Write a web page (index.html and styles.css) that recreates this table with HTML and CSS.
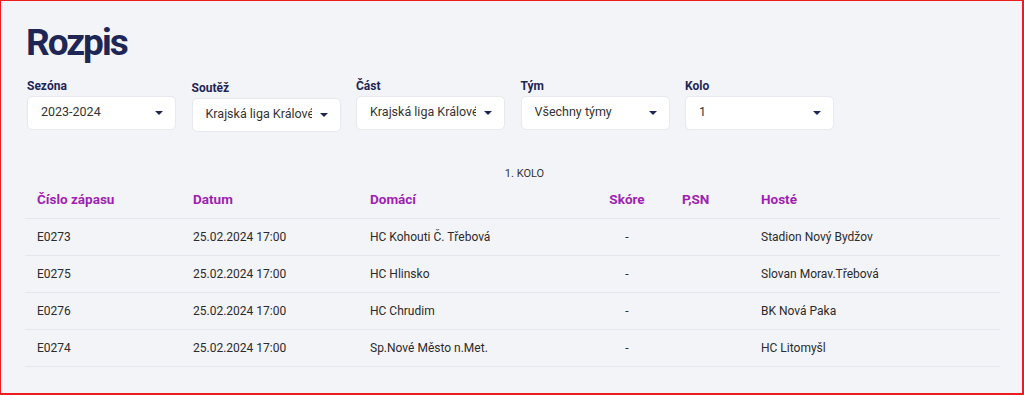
FILE: index.html
```html
<!DOCTYPE html>
<html lang="cs">
<head>
<meta charset="utf-8">
<title>Rozpis</title>
<link rel="stylesheet" href="styles.css">
</head>
<body>
<div class="frame">
  <h1 class="title">Rozpis</h1>
  <div class="filters">
    <div class="filter">
      <label class="flabel">Sezóna</label>
      <div class="select"><span class="sval">2023-2024</span><span class="caret"></span></div>
    </div>
    <div class="filter low">
      <label class="flabel">Soutěž</label>
      <div class="select"><span class="sval">Krajská liga Královéhradeckého kraje</span><span class="caret"></span></div>
    </div>
    <div class="filter">
      <label class="flabel">Část</label>
      <div class="select"><span class="sval">Krajská liga Královéhradeckého kraje</span><span class="caret"></span></div>
    </div>
    <div class="filter">
      <label class="flabel">Tým</label>
      <div class="select"><span class="sval">Všechny týmy</span><span class="caret"></span></div>
    </div>
    <div class="filter">
      <label class="flabel">Kolo</label>
      <div class="select"><span class="sval">1</span><span class="caret"></span></div>
    </div>
  </div>

  <div class="round">1. KOLO</div>
  <div class="table">
    <div class="row head">
      <div class="c">Číslo zápasu</div>
      <div class="c">Datum</div>
      <div class="c">Domácí</div>
      <div class="c center">Skóre</div>
      <div class="c psn">P,SN</div>
      <div class="c">Hosté</div>
    </div>
    <div class="row">
      <div class="c">E0273</div>
      <div class="c">25.02.2024 17:00</div>
      <div class="c">HC Kohouti Č. Třebová</div>
      <div class="c center">-</div>
      <div class="c psn"></div>
      <div class="c">Stadion Nový Bydžov</div>
    </div>
    <div class="row">
      <div class="c">E0275</div>
      <div class="c">25.02.2024 17:00</div>
      <div class="c">HC Hlinsko</div>
      <div class="c center">-</div>
      <div class="c psn"></div>
      <div class="c">Slovan Morav.Třebová</div>
    </div>
    <div class="row">
      <div class="c">E0276</div>
      <div class="c">25.02.2024 17:00</div>
      <div class="c">HC Chrudim</div>
      <div class="c center">-</div>
      <div class="c psn"></div>
      <div class="c">BK Nová Paka</div>
    </div>
    <div class="row">
      <div class="c">E0274</div>
      <div class="c">25.02.2024 17:00</div>
      <div class="c">Sp.Nové Město n.Met.</div>
      <div class="c center">-</div>
      <div class="c psn"></div>
      <div class="c">HC Litomyšl</div>
    </div>
  </div>
</div>
</body>
</html>
```

FILE: styles.css
```css
* { box-sizing: border-box; }
html, body { margin: 0; padding: 0; }
body {
  font-family: Roboto, "Liberation Sans", Arial, sans-serif;
  background: #f3f4f8;
  color: #2b2b2b;
}
.frame {
  width: 1024px;
  height: 395px;
  border-style: solid;
  border-color: #ee1c1c;
  border-width: 1px 2px 2px 1px;
  background: #f3f4f8;
  padding: 20px 22px 0 24px;
  overflow: hidden;
}
.title {
  margin: 0;
  font-size: 37px;
  line-height: 44px;
  font-weight: 700;
  letter-spacing: -2px;
  color: #1e2656;
  padding-left: 1px;
}
.filters {
  display: flex;
  gap: 15.5px;
  margin-top: 14px;
  padding-left: 2px;
}
.filter {
  display: flex;
  flex-direction: column;
  width: 149px;
}
.filter.low { padding-top: 2px; }
.flabel {
  font-size: 12px;
  font-weight: 700;
  color: #1e2656;
  line-height: 15px;
  margin-bottom: 2px;
}
.select {
  height: 34px;
  background: #fff;
  border: 1px solid #e6e9f0;
  border-radius: 5px;
  display: flex;
  align-items: center;
  padding: 0 12px 0 13px;
  gap: 8px;
}
.sval {
  flex: 1;
  min-width: 0;
  white-space: nowrap;
  overflow: hidden;
  text-overflow: clip;
  font-size: 12.5px;
  line-height: 16px;
  margin-top: -2px;
  color: #333;
}
.caret {
  width: 0;
  height: 0;
  border-left: 4px solid transparent;
  border-right: 4px solid transparent;
  border-top: 4px solid #1e2656;
  flex: none;
}
.round {
  text-align: center;
  font-size: 11px;
  color: #333;
  margin-top: 35px;
  padding-left: 24px;
  line-height: 14px;
}
.table {
  margin-top: 2px;
  width: 975px;
}
.row {
  display: grid;
  grid-template-columns: 156px 177px 233px 72px 86px 1fr;
  height: 37px;
  align-items: center;
  border-bottom: 1px solid #e3e6ee;
  font-size: 12px;
  color: #2b2b2b;
}
.row.head {
  height: 36px;
  padding-bottom: 4px;
  font-size: 13.5px;
  font-weight: 700;
  color: #a01fb3;
}
.c { padding-left: 12px; white-space: nowrap; }
.c.center { padding-left: 0; text-align: center; }
.c.psn { padding-left: 19px; }
```
